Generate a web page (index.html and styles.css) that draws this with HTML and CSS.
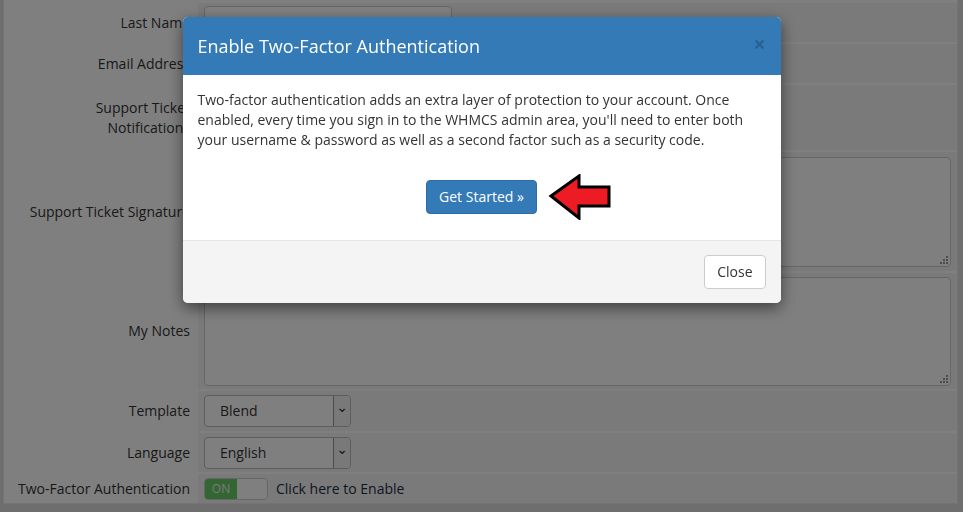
FILE: index.html
```html
<!DOCTYPE html>
<html lang="en">
<head>
  <meta charset="UTF-8" />
  <title>My Account</title>
  <link rel="stylesheet" href="styles.css">
</head>
<body>
  <form class="form-table">
    <div class="label">Last Name</div>
    <div class="field"><input type="text" class="input w-md" value="Stefanik"></div>

    <div class="label">Email Address</div>
    <div class="field"><input type="text" class="input w-lg" value="admin@example.com"></div>

    <div class="label">Support Ticket Notifications</div>
    <div class="field">
      <label class="check"><input type="checkbox" checked> General Enquiries</label>
    </div>

    <div class="label">Support Ticket Signature</div>
    <div class="field">
      <div class="ta">
        <textarea rows="5"></textarea>
        <svg class="grip" width="8" height="8" viewBox="0 0 8 8"><rect x="6" y="0" width="2" height="2"/><rect x="3" y="3" width="2" height="2"/><rect x="6" y="3" width="2" height="2"/><rect x="0" y="6" width="2" height="2"/><rect x="3" y="6" width="2" height="2"/><rect x="6" y="6" width="2" height="2"/></svg>
      </div>
    </div>

    <div class="label">My Notes</div>
    <div class="field">
      <div class="ta notes">
        <textarea rows="5"></textarea>
        <svg class="grip" width="8" height="8" viewBox="0 0 8 8"><rect x="6" y="0" width="2" height="2"/><rect x="3" y="3" width="2" height="2"/><rect x="6" y="3" width="2" height="2"/><rect x="0" y="6" width="2" height="2"/><rect x="3" y="6" width="2" height="2"/><rect x="6" y="6" width="2" height="2"/></svg>
      </div>
    </div>

    <div class="label">Template</div>
    <div class="field">
      <div class="select"><span class="value">Blend</span><span class="caret">&#8964;</span></div>
    </div>

    <div class="label">Language</div>
    <div class="field">
      <div class="select"><span class="value">English</span><span class="caret">&#8964;</span></div>
    </div>

    <div class="label">Two-Factor Authentication</div>
    <div class="field">
      <span class="switch"><span class="on">ON</span><span class="off"></span></span>
      <a class="enable-link" href="#">Click here to Enable</a>
    </div>
  </form>

  <div class="backdrop"></div>

  <div class="modal">
    <div class="modal-content">
      <div class="modal-header">
        <h4 class="modal-title">Enable Two-Factor Authentication</h4>
        <button type="button" class="close">&times;</button>
      </div>
      <div class="modal-body">
        <p>Two-factor authentication adds an extra layer of protection to your account. Once enabled, every time you sign in to the WHMCS admin area, you'll need to enter both your username &amp; password as well as a second factor such as a security code.</p>
        <div class="actions">
          <span class="cta">
            <button type="button" class="btn btn-primary">Get Started &raquo;</button>
            <svg class="arrow" width="64" height="46" viewBox="0 0 64 46"><polygon points="3,22 31,2 31,13 61,13 61,32 31,32 31,44" fill="#ed1c24" stroke="#000" stroke-width="3"/></svg>
          </span>
        </div>
      </div>
      <div class="modal-footer">
        <button type="button" class="btn btn-default">Close</button>
      </div>
    </div>
  </div>
</body>
</html>
```

FILE: styles.css
```css
body {
  margin: 0;
  font-family: 'Open Sans', 'DejaVu Sans', sans-serif;
  font-size: 14px;
  line-height: 1.42857;
  color: #333;
  background-color: #dcdcdc;
}

/* Form behind the modal */
.form-table {
  display: grid;
  grid-template-columns: 192px 1fr;
  grid-template-rows: 39px 39px 65px 119px 116px 40px 39px 29px;
  gap: 2px;
  margin: 0 5px 0 3px;
  padding: 3px 0 0;
  background-color: #fff;
  border: 1px solid #e8e8e8;
  border-top: none;
}

.label {
  display: flex;
  align-items: center;
  justify-content: flex-end;
  text-align: right;
  padding: 0 6px 0 10px;
  background-color: #fff;
}

.field {
  display: flex;
  align-items: center;
  padding: 0 6px;
  background-color: #f4f4f4;
}

.input {
  box-sizing: border-box;
  height: 34px;
  padding: 6px 12px;
  font: inherit;
  color: #555;
  background-color: #fff;
  border: 1px solid #ccc;
  border-radius: 4px;
}

.w-md { width: 248px; }
.w-lg { width: 420px; }

.check {
  display: flex;
  align-items: center;
  gap: 6px;
}

.ta {
  position: relative;
  flex: 1;
  height: 110px;
}

.ta.notes {
  height: 109px;
}

.ta textarea {
  box-sizing: border-box;
  display: block;
  width: 100%;
  height: 100%;
  resize: none;
  font: inherit;
  background-color: #fff;
  border: 1px solid #ccc;
  border-radius: 4px;
}

.grip {
  position: absolute;
  right: 3px;
  bottom: 3px;
  fill: #999;
}

.select {
  box-sizing: border-box;
  display: flex;
  width: 147px;
  height: 32px;
  background-color: #fff;
  border: 1px solid #bbb;
  border-radius: 4px;
  overflow: hidden;
}

.select .value {
  flex: 1;
  padding: 5px 15px;
  color: #333;
}

.select .caret {
  width: 16px;
  border-left: 1px solid #999;
  background-color: #f2f2f2;
  font-size: 14px;
  line-height: 22px;
  text-align: center;
  color: #333;
}

.switch {
  box-sizing: border-box;
  display: flex;
  width: 64px;
  height: 22px;
  border: 1px solid #ccc;
  border-radius: 4px;
  overflow: hidden;
  background-color: #fff;
}

.switch .on {
  width: 32px;
  background-color: #66cc66;
  color: #f0f0f0;
  font-size: 12px;
  line-height: 20px;
  text-align: center;
}

.switch .off {
  flex: 1;
}

.enable-link {
  margin-left: 8px;
  color: #1b2f44;
  text-decoration: none;
}

/* Modal */
.backdrop {
  position: fixed;
  inset: 0;
  background-color: rgba(0, 0, 0, 0.5);
}

.modal {
  position: fixed;
  inset: 0;
}

.modal-content {
  width: 598px;
  margin: 17px auto 0;
  background-color: #fff;
  border-radius: 5px;
  box-shadow: 0 5px 15px rgba(0, 0, 0, 0.5);
  overflow: hidden;
}

.modal-header {
  display: flex;
  align-items: center;
  justify-content: space-between;
  padding: 16px 15px;
  background-color: #337ab7;
}

.modal-title {
  margin: 0;
  font-size: 18px;
  font-weight: 400;
  line-height: 26px;
  color: #fff;
}

.close {
  padding: 0;
  margin-top: -4px;
  font-family: inherit;
  font-size: 21px;
  font-weight: bold;
  line-height: 1;
  color: #000;
  opacity: 0.2;
  background: none;
  border: 0;
}

.modal-body {
  padding: 15px 15px 26px;
}

.modal-body p {
  margin: 0 0 30px;
}

.actions {
  display: flex;
  justify-content: center;
}

.cta {
  position: relative;
}

.arrow {
  position: absolute;
  left: calc(100% + 11px);
  top: 50%;
  transform: translateY(-50%);
}

.btn {
  display: block;
  padding: 6px 12px;
  font-family: inherit;
  font-size: 14px;
  line-height: 20px;
  border: 1px solid transparent;
  border-radius: 4px;
  cursor: pointer;
}

.btn-primary {
  color: #fff;
  background-color: #337ab7;
  border-color: #2e6da4;
}

.btn-default {
  color: #333;
  background-color: #fff;
  border-color: #ccc;
}

.modal-footer {
  display: flex;
  justify-content: flex-end;
  padding: 14px 15px;
  background-color: #f4f4f4;
  border-top: 1px solid #e5e5e5;
}
```
